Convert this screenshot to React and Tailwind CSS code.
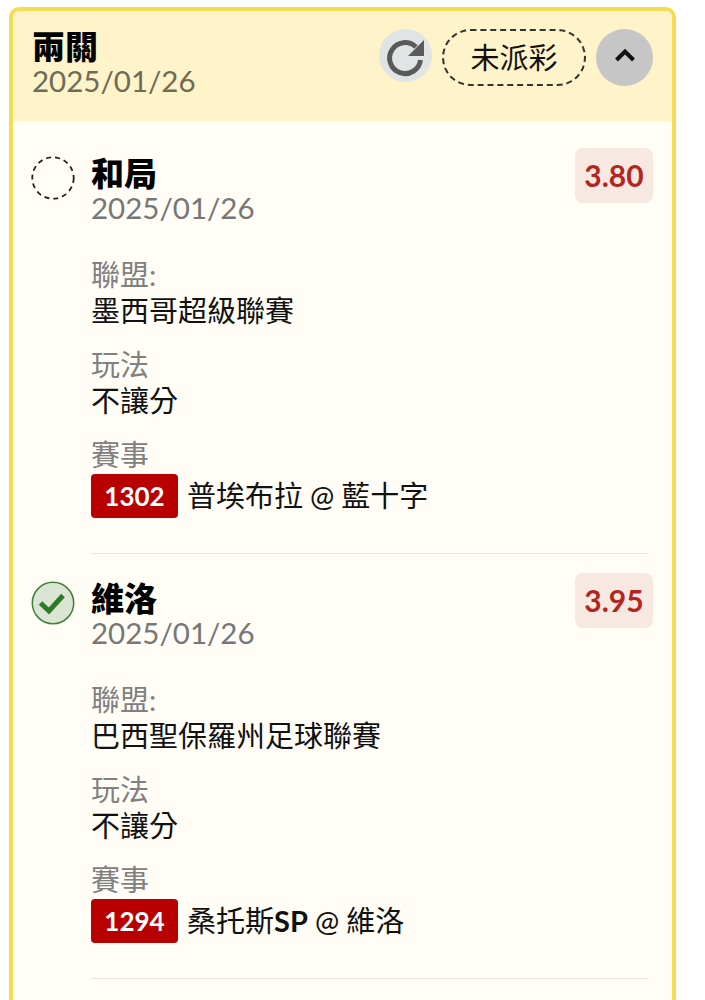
const FONT = "font-['Lato','Noto_Sans_CJK_TC',sans-serif]";

function Field({ label, children }) {
  return (
    <div className="mb-[18px]">
      <div className="text-[29px] leading-[36px] text-[#808080]">{label}</div>
      <div className="text-[29px] leading-[36px] text-[#111111]">{children}</div>
    </div>
  );
}

function Pick({ title, odds, league, code, match, checked }) {
  return (
    <div className="flex">
      <div className="w-[60px] shrink-0 pl-[1px]">
        {checked ? (
          <svg width="44" height="44" viewBox="0 0 44 44" className="mt-[8px] -ml-[1px]">
            <circle cx="22" cy="22" r="20.7" fill="#dbe5d3" stroke="#3f7f3a" strokeWidth="1.5" />
            <path d="M9.5 22 L18 30 L32 14.5" fill="none" stroke="#2f7a27" strokeWidth="5" />
          </svg>
        ) : (
          <svg width="44" height="44" viewBox="0 0 44 44" className="mt-[8px] -ml-[1px]">
            <circle cx="22" cy="22" r="20.7" fill="none" stroke="#222222" strokeWidth="1.8" strokeDasharray="5 4" />
          </svg>
        )}
      </div>
      <div className="flex-1 border-b border-[#e9e6dc] pb-[20px]">
        <div className="flex items-start justify-between">
          <div className="pt-[7px]">
            <div className="text-[33px] leading-[36px] font-black text-black">{title}</div>
            <div className="text-[29.5px] leading-[34px] text-[#767676]">2025/01/26</div>
          </div>
          <div className="-mr-[4px] h-[55px] w-[78px] rounded-[8px] bg-[#f7e9e2] text-center text-[30px] leading-[54px] font-bold text-[#b3261e]">
            {odds}
          </div>
        </div>
        <div className="mt-[32px]">
          <Field label="聯盟:">{league}</Field>
          <Field label="玩法">不讓分</Field>
          <div className="mb-[15px]">
            <div className="text-[29px] leading-[36px] text-[#808080]">賽事</div>
            <div className="mt-[1px] flex items-center text-[29px] leading-[44px] text-[#111111]">
              <span className="mr-[9px] h-[44px] w-[87px] rounded-[4px] bg-[#b80000] text-center text-[26px] font-bold text-white">{code}</span>
              <span>{match}</span>
            </div>
          </div>
        </div>
      </div>
    </div>
  );
}

const At = () => <span className="mx-[7px]">@</span>;

export default function App() {
  return (
    <div className={`${FONT} h-[1000px] w-[705px] overflow-hidden bg-white pl-[9px] pt-[7px]`}>
      <div className="h-[1010px] w-[667px] rounded-[10px] border-4 border-[#f5dc56] bg-[#fffdf6]">
        <div className="flex h-[110px] items-start justify-between rounded-t-[6px] bg-[#fef3c9] pl-[19px] pr-[18px]">
          <div className="pt-[17px]">
            <div className="text-[33px] leading-[36px] font-black text-black">兩關</div>
            <div className="text-[29.5px] leading-[34px] text-[#6e6a58]">2025/01/26</div>
          </div>
          <div className="mr-[1px] flex items-start pt-[18px]">
            <div className="h-[53px] w-[53px] rounded-full bg-[#e1e4e5]">
              <svg width="53" height="53" viewBox="0 0 53 53">
                <path d="M37 18 A15.5 15.5 0 1 0 41.5 31" fill="none" stroke="#5a5a5a" strokeWidth="5" />
                <path d="M45 11 V27 H29 Z" fill="#5a5a5a" />
              </svg>
            </div>
            <div className="ml-[10px] flex h-[57px] w-[144px] items-center justify-center rounded-full border-2 border-dashed border-[#333333] text-[29px] text-[#111111]">
              未派彩
            </div>
            <div className="ml-[10px] flex h-[57px] w-[57px] items-center justify-center rounded-full bg-[#c6c6c6]">
              <svg width="24" height="24" viewBox="0 0 24 24" className="mb-[3px]">
                <path d="M3.5 16 L12 7.5 L20.5 16" fill="none" stroke="#111111" strokeWidth="4" />
              </svg>
            </div>
          </div>
        </div>
        <div className="pl-[18px] pr-[23px] pt-[27px]">
          <Pick title="和局" odds="3.80" league="墨西哥超級聯賽" code="1302" match={<>普埃布拉<At />藍十字</>} />
          <div className="h-[19px]" />
          <Pick title="維洛" odds="3.95" league="巴西聖保羅州足球聯賽" code="1294" match={<>桑托斯<b>SP</b><At />維洛</>} checked />
        </div>
      </div>
    </div>
  );
}
